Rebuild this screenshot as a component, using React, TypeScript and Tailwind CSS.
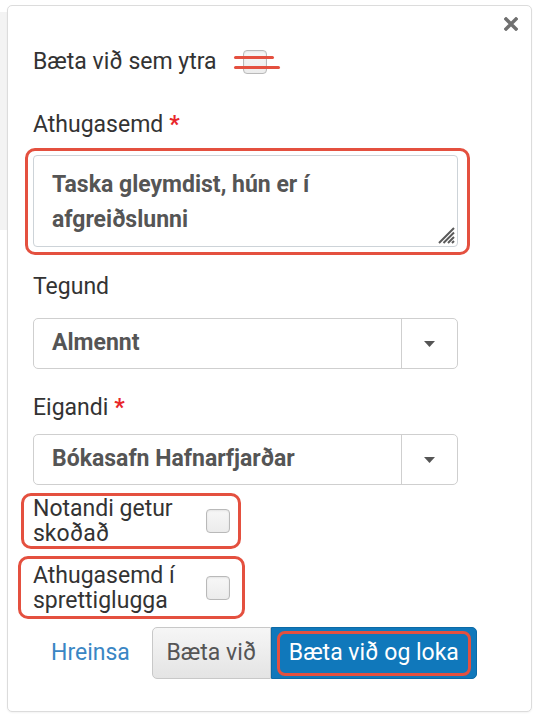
import React from "react";

const RED = "#e4503f";

function Checkbox({ className = "" }: { className?: string }) {
  return (
    <span
      className={`block h-[24px] w-[24px] shrink-0 rounded-[4px] border border-[#b9b9b9] bg-gradient-to-b from-[#f7f7f7] to-[#ececec] shadow-[inset_0_1px_2px_rgba(0,0,0,0.08)] ${className}`}
    />
  );
}

function Caret() {
  return (
    <svg width="11" height="6" viewBox="0 0 11 6" aria-hidden>
      <path d="M0 0 H11 L5.5 6 Z" fill="#555" />
    </svg>
  );
}

function Select({ value }: { value: string }) {
  return (
    <div className="flex h-[51px] w-[425px] items-stretch rounded-[5px] border border-[#cfcfcf] bg-white">
      <div className="flex flex-1 items-center pl-[18px] text-[23px] font-bold text-[#555]">
        {value}
      </div>
      <div className="flex w-[56px] items-center justify-center border-l border-[#cfcfcf]">
        <Caret />
      </div>
    </div>
  );
}

function Label({ text, required }: { text: string; required?: boolean }) {
  return (
    <div className="h-[30px] text-[23px] leading-[30px] text-[#333]">
      {text}
      {required && <span className="ml-[6px] font-bold text-[#e8262a]">*</span>}
    </div>
  );
}

export default function App() {
  return (
    <div className="flex min-h-[719px] bg-white font-['Roboto','Liberation_Sans',sans-serif]">
      <div className="w-[7px] shrink-0">
        <div className="mt-[12px] h-[218px] bg-[#f3f3f3]" />
      </div>

      <div className="relative mt-[5px] flex h-[707px] w-[525px] flex-col rounded-[5px] border border-[#dcdcdc] bg-white px-[25px] shadow-[0_1px_2px_rgba(0,0,0,0.05)]">
        <button aria-label="Loka" className="absolute right-[13px] top-[11px] p-0">
          <svg width="14" height="14" viewBox="0 0 14 14">
            <path d="M2 2 L12 12 M12 2 L2 12" stroke="#707070" strokeWidth="3.4" strokeLinecap="square" />
          </svg>
        </button>

        {/* external */}
        <div className="mt-[41px] flex h-[30px] items-center">
          <span className="text-[23px] leading-[30px] text-[#333]">Bæta við sem ytra</span>
          <span className="relative ml-[26px]">
            <Checkbox />
            <span className="absolute left-[-9px] top-[6px] h-[3px] w-[40px] rounded-full" style={{ backgroundColor: RED }} />
            <span className="absolute left-[-9px] top-[16px] h-[3px] w-[46px] rounded-full" style={{ backgroundColor: RED }} />
          </span>
        </div>

        <div className="mt-[33px]">
          <Label text="Athugasemd" required />
        </div>
        <div className="-ml-[8px] mt-[8px] w-fit rounded-[10px] border-[3px] border-[#e4503f] pb-[5px] pl-[5px] pr-[9px] pt-[4px]">
          <div className="relative">
            <textarea
              readOnly
              defaultValue="Taska gleymdist, hún er í afgreiðslunni"
              className="block h-[92px] w-[425px] resize-none rounded-[4px] border border-[#cdd3d8] bg-white pl-[18px] pr-[40px] pt-[11px] text-[23px] font-bold leading-[35px] text-[#555] outline-none"
            />
            <svg className="absolute bottom-[3px] right-[3px]" width="18" height="18" viewBox="0 0 18 18">
              <path d="M17 2 L2 17 M17 6.5 L6.5 17 M17 11 L11 17 M17 15 L15 17" stroke="#5a5a5a" strokeWidth="2" />
            </svg>
          </div>
        </div>

        <div className="mt-[17px]">
          <Label text="Tegund" />
        </div>
        <div className="mt-[16px]">
          <Select value="Almennt" />
        </div>

        <div className="mt-[24px]">
          <Label text="Eigandi" required />
        </div>
        <div className="mt-[11px]">
          <Select value="Bókasafn Hafnarfjarðar" />
        </div>

        <div className="-ml-[12px] mt-[8px] flex h-[56px] w-[220px] items-center rounded-[10px] border-[3px] border-[#e4503f] pl-[9px]">
          <span className="w-[160px] text-[23px] leading-[25px] text-[#333]">Notandi getur skoðað</span>
          <Checkbox className="ml-[13px]" />
        </div>

        <div className="-ml-[15px] mt-[7px] flex h-[63px] w-[227px] items-center rounded-[10px] border-[3px] border-[#e4503f] pl-[12px]">
          <span className="w-[160px] text-[23px] leading-[25px] text-[#333]">Athugasemd í sprettiglugga</span>
          <Checkbox className="ml-[13px]" />
        </div>

        <div className="mt-[8px] flex h-[52px] items-stretch">
          <button className="ml-[18px] mr-[22px] text-[23px] text-[#3a86c4]">Hreinsa</button>
          <button className="w-[119px] rounded-l-[5px] border border-[#c8c8c8] bg-gradient-to-b from-[#f6f6f6] to-[#e4e4e4] text-[23px] text-[#555]">
            Bæta við
          </button>
          <button className="relative w-[206px] rounded-r-[5px] border border-[#0c6aa6] bg-[#1078bb] text-[23px] text-white">
            Bæta við og loka
            <span className="absolute bottom-[2px] left-[5px] right-[5px] top-[3px] rounded-[8px] border-[3px] border-[#e4503f]" />
          </button>
        </div>
      </div>
    </div>
  );
}
